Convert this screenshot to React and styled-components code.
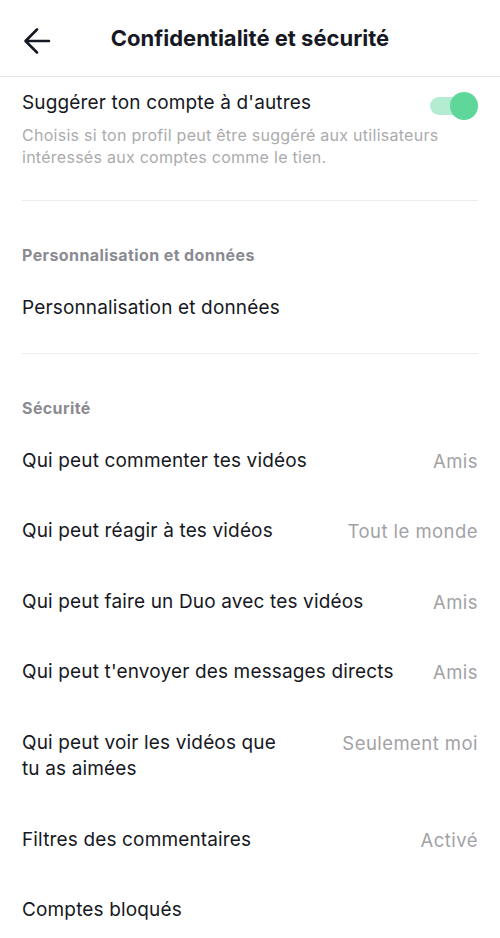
import React from 'react';
import styled, { createGlobalStyle } from 'styled-components';

const Global = createGlobalStyle`
  body {
    margin: 0;
    background: #fff;
    font-family: "Inter", "Noto Sans", sans-serif;
    color: #161823;
  }
`;

// HEADER
const Header = styled.header`
  height: 76px;
  display: flex;
  align-items: center;
  justify-content: center;
  position: relative;
  border-bottom: 1.5px solid #e3e3e4;
`;

const Back = styled.button`
  position: absolute;
  left: 22px;
  top: 26px;
  width: 30px;
  height: 30px;
  padding: 0;
  border: 0;
  background: transparent;
  display: flex;
  align-items: center;
  justify-content: center;
`;

const Title = styled.h1`
  margin: 0;
  font-size: 22px;
  font-weight: 700;
  color: #161823;
`;

// TOGGLE BLOCK
const ToggleBlock = styled.section`
  padding: 14px 22px 32px;
`;

const ToggleRow = styled.div`
  display: flex;
  align-items: center;
  justify-content: space-between;
`;

const Label = styled.span`
  font-size: 19px;
  letter-spacing: 0.15px;
  line-height: 24px;
  color: #161823;
`;

const Description = styled.p`
  margin: 9px 0 0;
  font-size: 16px;
  letter-spacing: 0.27px;
  line-height: 22px;
  color: #ababae;
`;

const Track = styled.div`
  position: relative;
  width: 48px;
  height: 18px;
  border-radius: 9px;
  background: ${p => (p.on ? '#b4ecd1' : '#e0e0e0')};
  margin-top: 6px;
`;

const Knob = styled.div`
  position: absolute;
  top: -5px;
  ${p => (p.on ? 'right: 0;' : 'left: 0;')}
  width: 28px;
  height: 28px;
  border-radius: 50%;
  background: ${p => (p.on ? '#5fd69a' : '#fff')};
`;

// LIST
const Divider = styled.hr`
  margin: ${p => p.gap || 0}px 22px 0;
  border: 0;
  border-top: 1px solid #ececed;
`;

const SectionTitle = styled.h2`
  margin: 0;
  padding: 44px 22px 8px;
  font-size: 16px;
  letter-spacing: 0.4px;
  line-height: 20px;
  font-weight: 700;
  color: #8a8b91;
`;

const Row = styled.div`
  display: flex;
  justify-content: space-between;
  align-items: flex-start;
  gap: 24px;
  padding: 22px 22px;
`;

const RowLabel = styled.span`
  font-size: 19px;
  letter-spacing: 0.15px;
  line-height: 26.5px;
  color: #161823;
  max-width: ${p => (p.narrow ? '265px' : 'none')};
`;

const RowValue = styled.span`
  font-size: 18.5px;
  letter-spacing: 0.45px;
  line-height: 26.5px;
  color: #a2a2a5;
  white-space: nowrap;
`;

const ArrowIcon = () => (
  <svg width="28" height="28" viewBox="0 0 28 28" fill="none">
    <path d="M26 14H3M14 2.5L2.5 14L14 25.5" stroke="#161823" strokeWidth="2.6" strokeLinecap="round" strokeLinejoin="round" />
  </svg>
);

const security = [
  { label: 'Qui peut commenter tes vidéos', value: 'Amis' },
  { label: 'Qui peut réagir à tes vidéos', value: 'Tout le monde' },
  { label: 'Qui peut faire un Duo avec tes vidéos', value: 'Amis' },
  { label: "Qui peut t'envoyer des messages directs", value: 'Amis' },
  { label: 'Qui peut voir les vidéos que tu as aimées', value: 'Seulement moi', narrow: true },
  { label: 'Filtres des commentaires', value: 'Activé' },
  { label: 'Comptes bloqués' },
];

export default function App() {
  return (
    <>
      <Global />
      <Header>
        <Back aria-label="Retour"><ArrowIcon /></Back>
        <Title>Confidentialité et sécurité</Title>
      </Header>

      <ToggleBlock>
        <ToggleRow>
          <Label>Suggérer ton compte à d'autres</Label>
          <Track on><Knob on /></Track>
        </ToggleRow>
        <Description>
          Choisis si ton profil peut être suggéré aux utilisateurs intéressés aux comptes comme le tien.
        </Description>
      </ToggleBlock>
      <Divider />

      <SectionTitle>Personnalisation et données</SectionTitle>
      <Row>
        <RowLabel>Personnalisation et données</RowLabel>
      </Row>
      <Divider gap={9} />

      <SectionTitle>Sécurité</SectionTitle>
      {security.map(item => (
        <Row key={item.label}>
          <RowLabel narrow={item.narrow}>{item.label}</RowLabel>
          {item.value && <RowValue>{item.value}</RowValue>}
        </Row>
      ))}
    </>
  );
}
